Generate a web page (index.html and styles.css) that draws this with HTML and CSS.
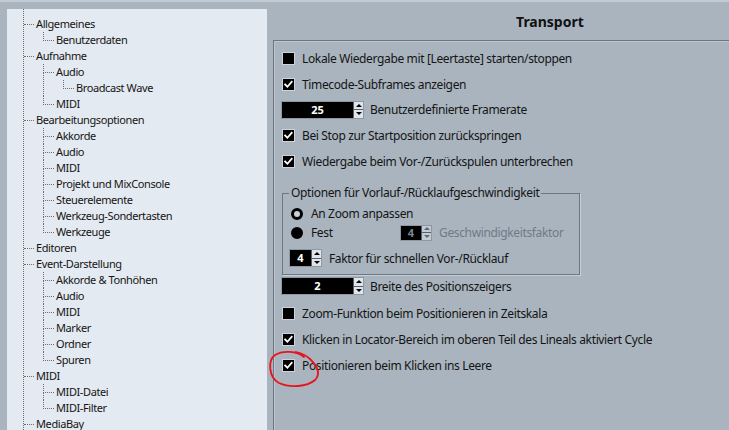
FILE: index.html
```html
<!DOCTYPE html>
<html lang="de">
<head>
<meta charset="utf-8">
<title>Transport</title>
<link rel="stylesheet" href="styles.css">
</head>
<body>
<div class="window">
  <aside class="nav">
    <ul class="tree root">
      <li>Allgemeines
        <ul><li>Benutzerdaten</li></ul>
      </li>
      <li>Aufnahme
        <ul>
          <li>Audio
            <ul><li>Broadcast Wave</li></ul>
          </li>
          <li>MIDI</li>
        </ul>
      </li>
      <li>Bearbeitungsoptionen
        <ul>
          <li>Akkorde</li>
          <li>Audio</li>
          <li>MIDI</li>
          <li>Projekt und MixConsole</li>
          <li>Steuerelemente</li>
          <li>Werkzeug-Sondertasten</li>
          <li>Werkzeuge</li>
        </ul>
      </li>
      <li>Editoren</li>
      <li>Event-Darstellung
        <ul>
          <li>Akkorde &amp; Tonhöhen</li>
          <li>Audio</li>
          <li>MIDI</li>
          <li>Marker</li>
          <li>Ordner</li>
          <li>Spuren</li>
        </ul>
      </li>
      <li>MIDI
        <ul>
          <li>MIDI-Datei</li>
          <li>MIDI-Filter</li>
        </ul>
      </li>
      <li>MediaBay</li>
    </ul>
  </aside>

  <main class="content">
    <h1 class="title">Transport</h1>
    <section class="panel">
      <div class="row">
        <span class="cb"></span>
        <span>Lokale Wiedergabe mit [Leertaste] starten/stoppen</span>
      </div>
      <div class="row">
        <span class="cb"><svg viewBox="0 0 13 13"><path d="M2.5 6.5 L5.2 9.2 L10.3 3.4"/></svg></span>
        <span>Timecode-Subframes anzeigen</span>
      </div>
      <div class="row spin-row">
        <span class="spin wide"><span class="val">25</span><span class="btns"><i class="up"></i><i class="dn"></i></span></span>
        <span>Benutzerdefinierte Framerate</span>
      </div>
      <div class="row">
        <span class="cb"><svg viewBox="0 0 13 13"><path d="M2.5 6.5 L5.2 9.2 L10.3 3.4"/></svg></span>
        <span>Bei Stop zur Startposition zurückspringen</span>
      </div>
      <div class="row">
        <span class="cb"><svg viewBox="0 0 13 13"><path d="M2.5 6.5 L5.2 9.2 L10.3 3.4"/></svg></span>
        <span>Wiedergabe beim Vor-/Zurückspulen unterbrechen</span>
      </div>

      <fieldset class="group">
        <legend>Optionen für Vorlauf-/Rücklaufgeschwindigkeit</legend>
        <div class="rrow">
          <span class="radio"></span>
          <span>An Zoom anpassen</span>
        </div>
        <div class="rrow">
          <span class="radio on"></span>
          <span class="fest">Fest</span>
          <span class="spin mini disabled"><span class="val">4</span><span class="btns"><i class="up"></i><i class="dn"></i></span></span>
          <span class="muted">Geschwindigkeitsfaktor</span>
        </div>
        <div class="row grow">
          <span class="spin small"><span class="val">4</span><span class="btns"><i class="up"></i><i class="dn"></i></span></span>
          <span>Faktor für schnellen Vor-/Rücklauf</span>
        </div>
      </fieldset>

      <div class="row spin-row after">
        <span class="spin wide"><span class="val">2</span><span class="btns"><i class="up"></i><i class="dn"></i></span></span>
        <span>Breite des Positionszeigers</span>
      </div>
      <div class="row first-after">
        <span class="cb"></span>
        <span>Zoom-Funktion beim Positionieren in Zeitskala</span>
      </div>
      <div class="row">
        <span class="cb"><svg viewBox="0 0 13 13"><path d="M2.5 6.5 L5.2 9.2 L10.3 3.4"/></svg></span>
        <span>Klicken in Locator-Bereich im oberen Teil des Lineals aktiviert Cycle</span>
      </div>
      <div class="row">
        <span class="cb"><svg viewBox="0 0 13 13"><path d="M2.5 6.5 L5.2 9.2 L10.3 3.4"/></svg></span>
        <span>Positionieren beim Klicken ins Leere</span>
      </div>
    </section>
  </main>
</div>

<svg class="annot" viewBox="0 0 729 430" width="729" height="430">
  <path d="M304 357 C297 351 283 350 275 355 C268 360 268 377 279 383 C290 388 307 387 315 380 C321 374 317 366 310 359 C306 355 300 353 296 352"/>
</svg>
</body>
</html>
```

FILE: styles.css
```css
* { box-sizing: border-box; }

body {
  margin: 0;
  width: 729px;
  height: 430px;
  overflow: hidden;
  position: relative;
  background: #a9b4bf;
  font-family: "Noto Sans", "Open Sans", sans-serif;
  color: #141414;
}

.window {
  display: flex;
  height: 430px;
  border-top: 2px solid #c2cad2;
}

/* ---------- tree ---------- */
.nav {
  margin: 7px 0 0 7px;
  width: 260px;
  background: #e4eaf1;
  overflow: hidden;
  font-size: 11px;
  letter-spacing: -0.4px;
}

.tree {
  list-style: none;
  margin: 0;
  padding: 0;
}

.tree li {
  position: relative;
  line-height: 16px;
  white-space: nowrap;
}

.root {
  margin-left: 16px;
  padding-top: 7px;
  border-left: 1px dotted #6e6e6e;
  height: 100%;
}

.root > li { padding-left: 12px; }

.root > li::before {
  content: "";
  position: absolute;
  left: 0;
  top: 8px;
  width: 10px;
  border-top: 1px dotted #6e6e6e;
}

.tree ul {
  list-style: none;
  margin: 0 0 0 7px;
  padding: 0;
}

.tree ul li { padding-left: 13px; }

.tree ul li::before {
  content: "";
  position: absolute;
  left: 0;
  top: 0;
  width: 10px;
  height: 8px;
  border-left: 1px dotted #6e6e6e;
  border-bottom: 1px dotted #6e6e6e;
}

.tree ul li:not(:last-child)::after {
  content: "";
  position: absolute;
  left: 0;
  top: 9px;
  bottom: 0;
  border-left: 1px dotted #6e6e6e;
}

/* ---------- content ---------- */
.content {
  flex: 1;
  display: flex;
  flex-direction: column;
}

.title {
  margin: 0;
  height: 38px;
  padding: 11px 0 0 249px;
  font-size: 14px;
  line-height: 18px;
  font-weight: bold;
  color: #111;
}

.panel {
  flex: 1;
  margin-left: 6px;
  border-left: 1px solid #6b7682;
  border-top: 1px solid #6b7682;
  box-shadow: inset 1px 1px 0 #bcc5ce;
  padding: 4px 0 0 8px;
  font-size: 12px;
  letter-spacing: -0.36px;
}

.row {
  display: flex;
  align-items: center;
  gap: 7px;
  height: 26px;
  white-space: nowrap;
}

.spin-row {
  height: 25px;
  gap: 6px;
}

.spin-row .spin { margin-left: -1px; }

.row.after {
  height: 18px;
  margin-top: 2px;
}

.row.first-after { margin-top: 5px; }

/* checkbox */
.cb {
  flex: none;
  width: 13px;
  height: 13px;
  background: #000;
  border: 1px solid #cdd3d9;
  display: flex;
}

.cb svg {
  width: 11px;
  height: 11px;
}

.cb path {
  fill: none;
  stroke: #fff;
  stroke-width: 2.1;
  stroke-linecap: square;
}

/* spinner */
.spin {
  flex: none;
  display: flex;
  height: 18px;
  background: #000;
  border: 1px solid #8d98a3;
  letter-spacing: 0;
}

.spin.wide { width: 83px; }
.spin.small { width: 33px; margin-left: -2px; }
.spin.mini { width: 32px; height: 16px; }

.spin .val {
  flex: 1;
  color: #fff;
  font-weight: bold;
  font-size: 11px;
  line-height: 16px;
  text-align: center;
}

.spin.mini .val { line-height: 14px; }

.spin .btns {
  flex: none;
  width: 10px;
  display: flex;
  flex-direction: column;
  background: #e1e5e9;
  border-left: 1px solid #55606b;
}

.spin .btns i {
  flex: 1;
  display: flex;
  align-items: center;
  justify-content: center;
}

.spin .btns .dn { border-top: 1px solid #55606b; }

.spin .btns .up::before {
  content: "";
  border-left: 3px solid transparent;
  border-right: 3px solid transparent;
  border-bottom: 3px solid #000;
}

.spin .btns .dn::before {
  content: "";
  border-left: 3px solid transparent;
  border-right: 3px solid transparent;
  border-top: 3px solid #000;
}

.spin.disabled .val { color: #7b8793; }
.spin.disabled .btns { background: #c3cad1; }
.spin.disabled .btns .up::before { border-bottom-color: #5d6872; }
.spin.disabled .btns .dn::before { border-top-color: #5d6872; }

/* group box */
.group {
  margin: 11px 0 0 0;
  width: 298px;
  min-width: 0;
  padding: 3px 0 7px 8px;
  border: 1px solid #6d7884;
  box-shadow: 1px 1px 0 #c6ced6;
}

.group legend {
  padding: 0 2px;
  margin-left: -2px;
  font-size: 12px;
  line-height: 16px;
}

.rrow {
  display: flex;
  align-items: center;
  height: 19px;
  gap: 8px;
  white-space: nowrap;
}

.rrow .fest { width: 81px; }

.rrow .spin { margin-right: -1px; }

.row.grow {
  height: 18px;
  margin-top: 7px;
}

.radio {
  flex: none;
  width: 12px;
  height: 12px;
  border-radius: 50%;
  border: 3px solid #000;
  background: #c9d0d7;
}

.radio.on { background: #000; }

.muted { color: #6f7b87; }

/* red annotation */
.annot {
  position: absolute;
  top: 0;
  left: 0;
  pointer-events: none;
}

.annot path {
  fill: none;
  stroke: #e8141c;
  stroke-width: 1.8;
  stroke-linecap: round;
}
```
